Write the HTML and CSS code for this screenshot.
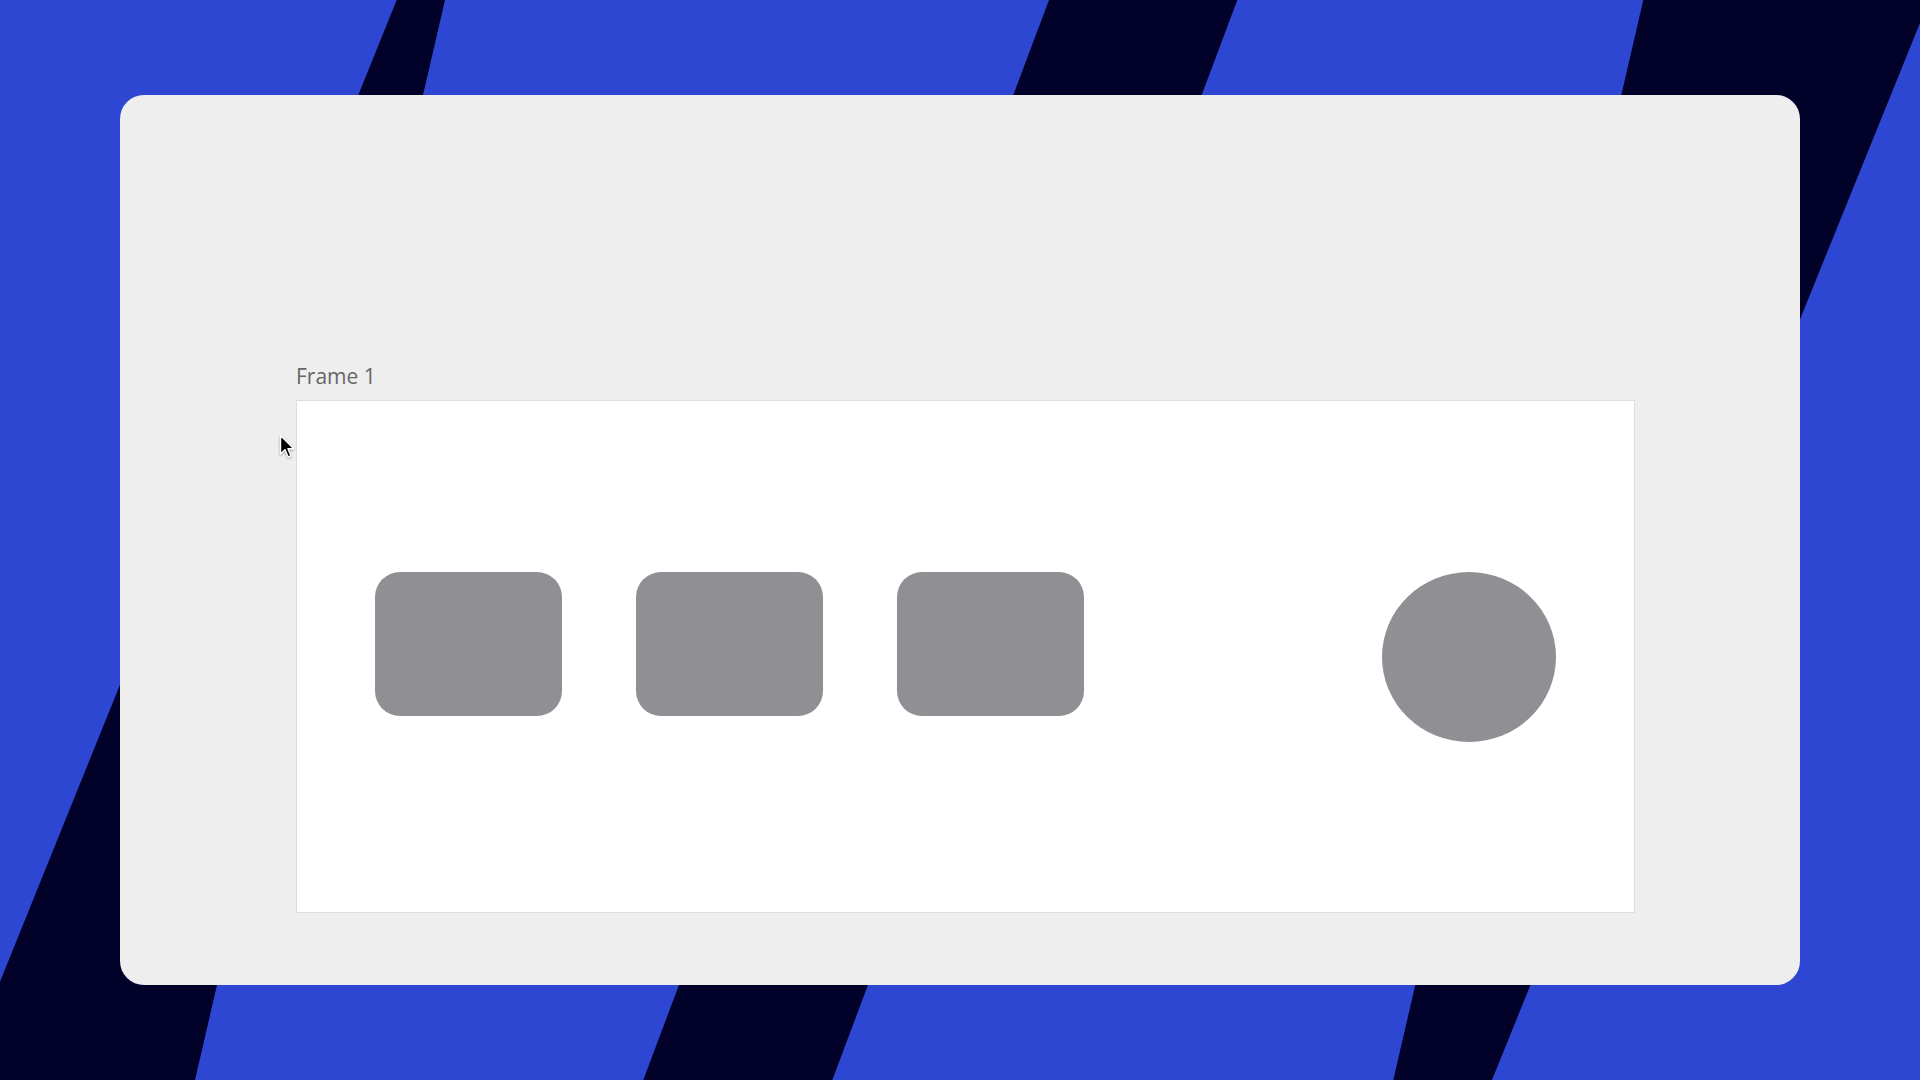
FILE: index.html
```html
<!DOCTYPE html>
<html lang="en">
<head>
<meta charset="utf-8">
<title>Frame 1</title>
<link rel="stylesheet" href="styles.css">
</head>
<body>
<div class="page">
  <svg class="backdrop" width="1920" height="1080" viewBox="0 0 1920 1080" aria-hidden="true">
    <rect x="0" y="0" width="1920" height="1080" fill="#2e47d3"/>
    <polygon points="396.7,0 445,0 195,1080 -39.7,1080" fill="#020129"/>
    <polygon points="1049,0 1237.3,0 832.3,1080 643.3,1080" fill="#020129"/>
    <polygon points="1643.3,0 1929.3,0 1492,1080 1393.3,1080" fill="#020129"/>
  </svg>
  <div class="card">
    <div class="frame-label">Frame 1</div>
    <div class="frame">
      <div class="shape rounded"></div>
      <div class="shape rounded"></div>
      <div class="shape rounded"></div>
      <div class="shape circle"></div>
    </div>
    <svg class="cursor" width="17" height="25" viewBox="0 0 17 25" aria-hidden="true">
      <path d="M1.5 1.5 L1.5 20 L6 15.8 L9.2 23 L12 21.8 L8.9 14.8 L14.8 14.8 Z" fill="#000" stroke="#fff" stroke-width="1.4" stroke-linejoin="round"/>
    </svg>
  </div>
</div>
</body>
</html>
```

FILE: styles.css
```css
html, body {
  margin: 0;
  padding: 0;
  width: 1920px;
  height: 1080px;
  overflow: hidden;
  background: #2e47d3;
  font-family: "Open Sans", "Noto Sans", "Liberation Sans", sans-serif;
}

.page {
  position: relative;
  width: 1920px;
  height: 1080px;
  box-sizing: border-box;
  padding: 95px 120px 0 120px;
}

.backdrop {
  position: absolute;
  left: 0;
  top: 0;
  display: block;
}

.card {
  position: relative;
  width: 1680px;
  height: 890px;
  box-sizing: border-box;
  background: #eeeeee;
  border-radius: 24px;
  padding: 268px 0 0 176px;
}

.frame-label {
  font-size: 21px;
  line-height: 27px;
  color: #666666;
  margin-bottom: 10px;
}

.frame {
  width: 1339px;
  height: 513px;
  box-sizing: border-box;
  background: #ffffff;
  border: 1px solid #dedede;
  padding: 171px 78px 0 78px;
  display: flex;
  align-items: flex-start;
  gap: 74px;
}

.shape {
  background: #8f8f94;
  flex: none;
}

.rounded {
  width: 187px;
  height: 144px;
  border-radius: 25px;
}

.circle {
  width: 174px;
  height: 170px;
  border-radius: 50%;
  margin-left: auto;
}

.cursor {
  position: absolute;
  left: 159px;
  top: 339px;
  filter: drop-shadow(0 1px 1px rgba(0,0,0,0.35));
}
```
